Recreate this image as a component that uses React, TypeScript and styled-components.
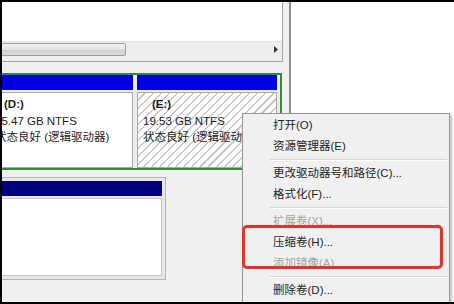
import React from "react";
import styled, {createGlobalStyle, css} from "styled-components";

const GlobalStyle = createGlobalStyle`
  html, body {
    margin: 0;
    padding: 0;
    background: #000;
  }
  body {
    font-family: "Liberation Sans", "Noto Sans CJK SC", sans-serif;
  }
`;

const Frame = styled.div`
  position: relative;
  width: 452px;
  height: 300px;
  border-top: 2px solid #000;
  border-left: 2px solid #000;
  border-bottom: 2px solid #000;
  background: #fff;
  overflow: hidden;
  display: flex;
  font-size: 11.5px;
  color: #1a1a1a;
`;

const LeftPane = styled.div`
  width: 287px;
  flex-shrink: 0;
  background: #f0f0f0;
  display: flex;
  flex-direction: column;
`;

const Divider = styled.div`
  width: 2px;
  flex-shrink: 0;
  background: #8c8c8c;
`;

const RightPane = styled.div`
  flex: 1;
  background: #fff;
`;

const VolumeList = styled.div`
  width: 280px;
  height: 59px;
  border-right: 1px solid #a4a4a4;
  border-bottom: 1px solid #a4a4a4;
  background: #f0f0f0;
  display: flex;
  flex-direction: column;
  overflow: hidden;
`;

const ListBody = styled.div`
  height: 39px;
  background: #fff;
`;

const ScrollTrack = styled.div`
  height: 17px;
  box-sizing: border-box;
  padding: 1px 0 2px;
  background: #eeeeee;
  border-top: 1px solid #e4e4e4;
  display: flex;
  align-items: stretch;
`;

const ScrollThumb = styled.div`
  width: 126px;
  margin-left: -4px;
  border: 1px solid #9c9c9c;
  border-radius: 2px;
  background: linear-gradient(#f4f4f4, #e2e2e2 50%, #d2d2d2 52%, #dadada);
`;

const ScrollArrow = styled.div`
  margin-left: auto;
  width: 12px;
  display: flex;
  align-items: center;
  justify-content: center;
`;

const GraphArea = styled.div`
  margin-left: -17px;
  padding-top: 11px;
  display: flex;
  flex-direction: column;
  gap: 7px;
`;

const ExtendedDisk = styled.div`
  width: 297px;
  height: 97px;
  box-sizing: border-box;
  border: 2px solid #2f8f2f;
  padding: 0 3px 0 2px;
  background: #ececec;
  display: flex;
  gap: 4px;
`;

const Partition = styled.div<{ $w?: number }>`
  ${p => p.$w ? css`width: ${p.$w}px;` : css`flex: 1;`}
  display: flex;
  flex-direction: column;
`;

const PartHeader = styled.div<{ $dark?: boolean }>`
  height: 15px;
  flex-shrink: 0;
  background: ${p => p.$dark ? "#00007c" : "#0000e2"};
`;

const PartBody = styled.div<{ $selected?: boolean }>`
  flex: 1;
  margin-top: 2px;
  padding: 3px 0 0 5px;
  border: 1px solid #a8a8a8;
  white-space: nowrap;
  overflow: hidden;
  background: ${p => p.$selected
    ? "repeating-linear-gradient(135deg, #fff 0 4.2px, #c9c9c9 4.2px 5.7px)"
    : "#fff"};
`;

const Line = styled.div`
  line-height: 16.5px;
  height: 16.5px;
  color: #1e1e1e;
`;

const DriveLabel = styled(Line)`
  padding-left: 9px;
  font-weight: bold;
`;

const BasicDisk = styled.div`
  width: 181px;
  box-sizing: border-box;
  border: 1px solid #b4b4b4;
  padding: 3px;
  background: #e8e8e8;
  display: flex;
  flex-direction: column;
`;

const DiskBody = styled.div`
  height: 76px;
  margin-top: 2px;
  background: #fff;
  border: 1px solid #c4c4c4;
`;

const Menu = styled.div`
  position: absolute;
  left: 240px;
  top: 111px;
  width: 208px;
  height: 200px;
  box-sizing: border-box;
  padding-top: 1px;
  background: #f0f0f0;
  border: 1px solid #979797;
  box-shadow: 2px 2px 3px rgba(0, 0, 0, 0.25);
`;

const MenuItem = styled.div<{ $disabled?: boolean }>`
  height: 21px;
  line-height: 21px;
  padding-left: 30px;
  white-space: nowrap;
  color: ${p => p.$disabled ? "#a3a3a3" : "#1e1e1e"};
`;

const MenuSep = styled.div`
  height: 6px;
  display: flex;
  align-items: center;
  padding: 0 2px 0 27px;

  &::after {
    content: "";
    flex: 1;
    height: 1px;
    background: #d6d6d6;
    border-bottom: 1px solid #fff;
  }
`;

const Highlight = styled.div`
  position: absolute;
  left: 240px;
  top: 223px;
  width: 201px;
  height: 44px;
  box-sizing: border-box;
  border: 3px solid #e2342c;
  border-radius: 5px;
`;

type Entry = { label: string; disabled?: boolean } | "sep";

const menu: Entry[] = [
    {label: "打开(O)"},
    {label: "资源管理器(E)"},
    "sep",
    {label: "更改驱动器号和路径(C)..."},
    {label: "格式化(F)..."},
    "sep",
    {label: "扩展卷(X)...", disabled: true},
    {label: "压缩卷(H)..."},
    {label: "添加镜像(A)", disabled: true},
    "sep",
    {label: "删除卷(D)..."},
];

export default function App() {
    return (
        <>
            <GlobalStyle/>
            <Frame>
                <LeftPane>
                    <VolumeList>
                        <ListBody/>
                        <ScrollTrack>
                            <ScrollThumb/>
                            <ScrollArrow>
                                <svg width="4" height="7" viewBox="0 0 4 7">
                                    <polygon points="0,0 4,3.5 0,7" fill="#333"/>
                                </svg>
                            </ScrollArrow>
                        </ScrollTrack>
                    </VolumeList>
                    <GraphArea>
                        <ExtendedDisk>
                            <Partition $w={144}>
                                <PartHeader/>
                                <PartBody>
                                    <DriveLabel>(D:)</DriveLabel>
                                    <Line>15.47 GB NTFS</Line>
                                    <Line>状态良好 (逻辑驱动器)</Line>
                                </PartBody>
                            </Partition>
                            <Partition>
                                <PartHeader/>
                                <PartBody $selected>
                                    <DriveLabel>(E:)</DriveLabel>
                                    <Line>19.53 GB NTFS</Line>
                                    <Line>状态良好 (逻辑驱动器)</Line>
                                </PartBody>
                            </Partition>
                        </ExtendedDisk>
                        <BasicDisk>
                            <PartHeader $dark/>
                            <DiskBody/>
                        </BasicDisk>
                    </GraphArea>
                </LeftPane>
                <Divider/>
                <RightPane/>
                <Menu>
                    {menu.map((m, i) => m === "sep"
                        ? <MenuSep key={i}/>
                        : <MenuItem key={i} $disabled={m.disabled}>{m.label}</MenuItem>)}
                </Menu>
                <Highlight/>
            </Frame>
        </>
    );
}
